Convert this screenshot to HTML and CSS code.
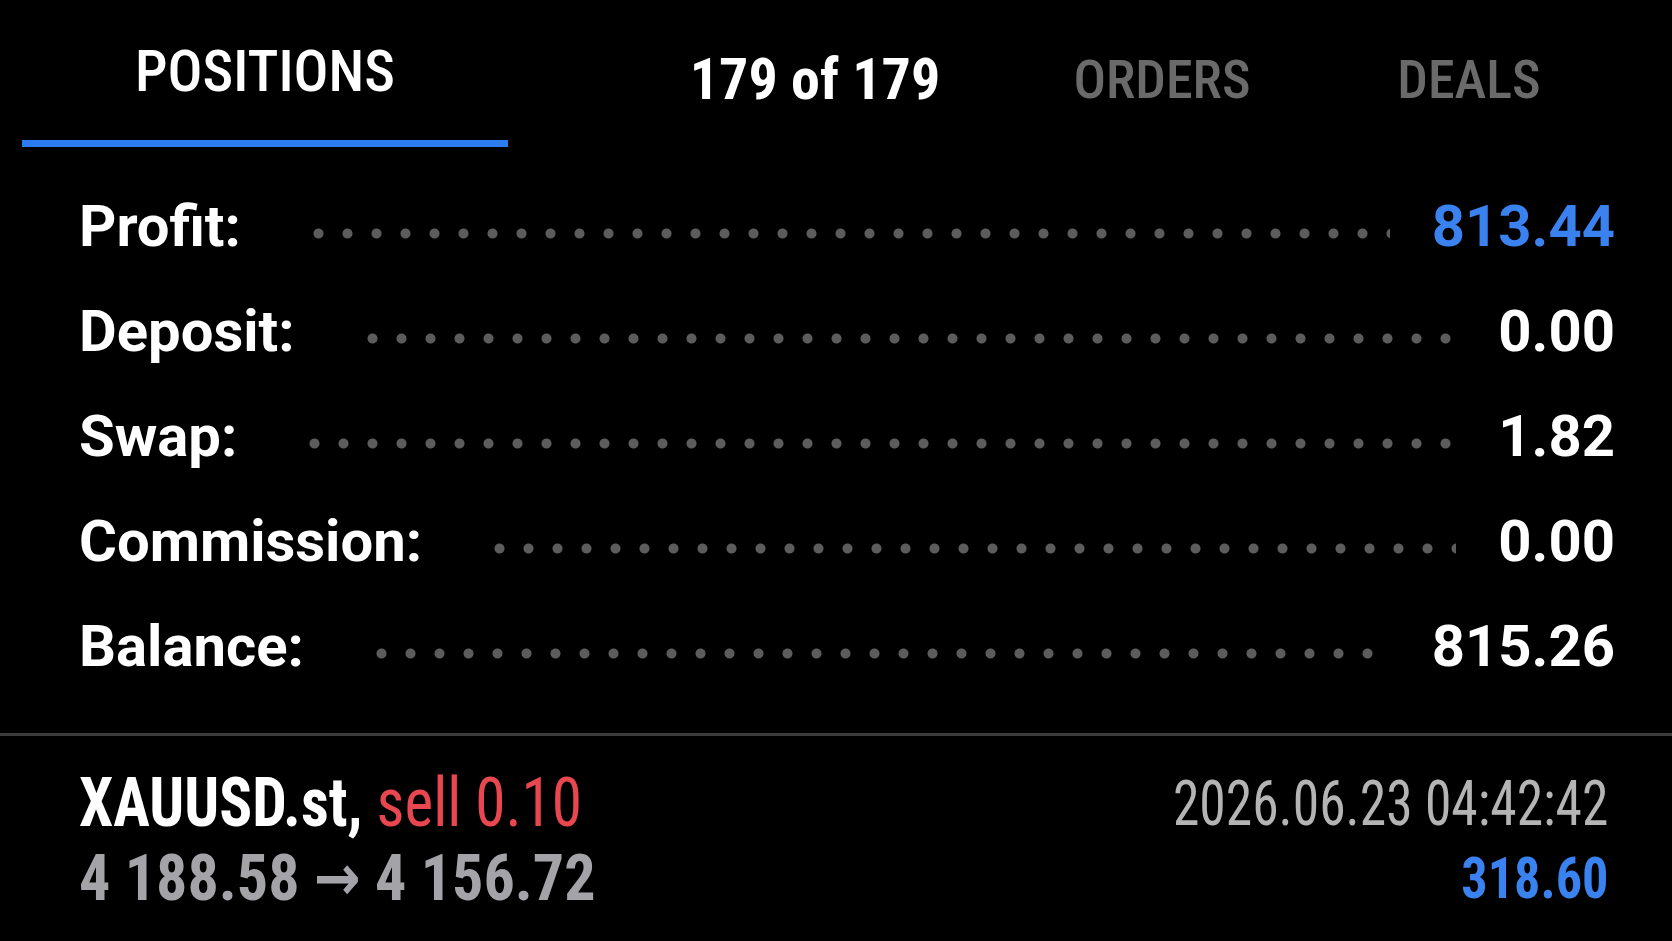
FILE: index.html
```html
<!DOCTYPE html>
<html lang="en">
<head>
    <meta charset="UTF-8">
    <title>Positions</title>
    <link rel="stylesheet" href="styles.css">
</head>
<body>

    <div class="tabs">
        <div class="tab tab-active">POSITIONS</div>
        <div class="tab tab-count">179 of 179</div>
        <div class="tab tab-orders">ORDERS</div>
        <div class="tab tab-deals">DEALS</div>
    </div>

    <div class="summary">
        <div class="row">
            <span class="label">Profit:</span>
            <span class="dots"></span>
            <span class="value blue">813.44</span>
        </div>
        <div class="row">
            <span class="label">Deposit:</span>
            <span class="dots"></span>
            <span class="value">0.00</span>
        </div>
        <div class="row">
            <span class="label">Swap:</span>
            <span class="dots"></span>
            <span class="value">1.82</span>
        </div>
        <div class="row">
            <span class="label">Commission:</span>
            <span class="dots"></span>
            <span class="value">0.00</span>
        </div>
        <div class="row">
            <span class="label">Balance:</span>
            <span class="dots"></span>
            <span class="value">815.26</span>
        </div>
    </div>

    <div class="position">
        <div class="position-left">
            <div class="symbol"><span class="narrow">XAUUSD.st, <span class="sell">sell 0.10</span></span></div>
            <div class="prices"><span class="narrow">4 188.58 → 4 156.72</span></div>
        </div>
        <div class="position-right">
            <div class="time"><span class="narrow">2026.06.23 04:42:42</span></div>
            <div class="pl"><span class="narrow">318.60</span></div>
        </div>
    </div>

</body>
</html>
```

FILE: styles.css
```css
body {
    margin: 0;
    background-color: #000;
    color: #fff;
    font-family: Roboto, "Noto Sans", sans-serif;
    overflow: hidden;
}

.tabs,
.position {
    font-family: "Roboto Condensed", "Liberation Sans Narrow", "DejaVu Sans Condensed", Roboto, sans-serif;
    font-stretch: condensed;
}

.tabs {
    display: flex;
    height: 147px;
    padding-left: 22px;
}

.tab {
    text-align: center;
    font-size: 54px;
    line-height: 1;
    padding-top: 53px;
    color: #6a6a6a;
    font-weight: 500;
}

.tab-active {
    width: 486px;
    color: #fff;
    font-size: 58px;
    padding-top: 42px;
    border-bottom: 7px solid #2b7cf0;
    box-sizing: border-box;
}

.tab-count {
    width: 430px;
    margin-left: 92px;
    padding-top: 50px;
    color: #fff;
    font-size: 58px;
    font-weight: 700;
}

.tab-orders {
    width: 264px;
}

.tab-deals {
    width: 350px;
}

.summary {
    padding: 26px 57px 35px 79px;
    border-bottom: 3px solid #3c3c3c;
}

.row {
    display: flex;
    align-items: center;
    height: 105px;
    font-size: 58px;
    font-weight: 700;
}

.dots {
    flex: 1;
    align-self: stretch;
    margin: 0 42px 0 63px;
    background-image: radial-gradient(circle, #5c5c5c 4.5px, transparent 5.5px);
    background-size: 29px 29px;
    background-repeat: repeat-x;
    background-position: 0 calc(50% + 8px);
}

.blue {
    color: #3a82f0;
}

/* last position in the list */
.position {
    display: flex;
    justify-content: space-between;
    padding: 30px 64px 0 79px;
    line-height: 75px;
}

.narrow {
    display: inline-block;
    white-space: nowrap;
    transform-origin: left center;
}

.symbol {
    font-size: 68px;
    font-weight: 700;
}

.symbol .narrow {
    transform: scaleX(0.9);
}

.sell {
    color: #e8474f;
    font-weight: 400;
}

.prices {
    color: #a3a3a8;
    font-size: 64px;
    font-weight: 700;
}

.prices .narrow {
    transform: scaleX(0.97);
}

.position-right {
    text-align: right;
}

.position-right .narrow {
    transform-origin: right center;
}

.time {
    color: #b4b4b4;
    font-size: 63px;
}

.time .narrow {
    transform: scaleX(0.85);
}

.pl {
    color: #3a82f0;
    font-weight: 700;
    font-size: 58px;
}

.pl .narrow {
    transform: scaleX(0.9);
}
```
